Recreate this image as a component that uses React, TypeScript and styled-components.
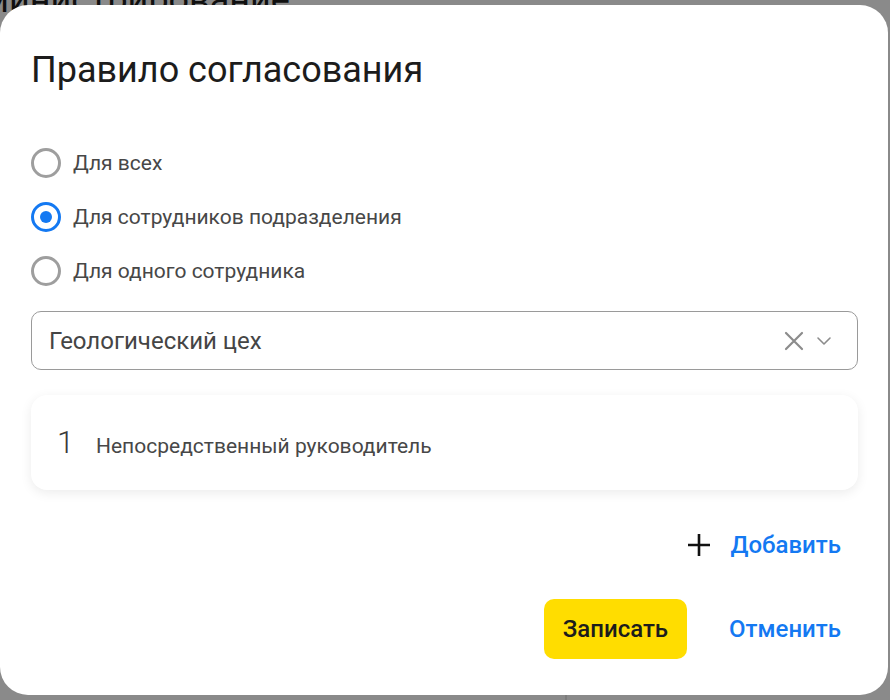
import React, { useState } from "react";
import styled, { createGlobalStyle } from "styled-components";

const GlobalStyle = createGlobalStyle`
  html, body { margin: 0; padding: 0; }
  body {
    font-family: Roboto, "Noto Sans", "Liberation Sans", sans-serif;
    background: #ffffff;
    overflow: hidden;
    width: 890px;
    height: 700px;
  }
  * { box-sizing: border-box; }
`;

const Page = styled.div`
  position: relative;
  width: 890px;
  height: 700px;
  overflow: hidden;
  display: flex;
  flex-direction: column;
`;

const PageHeading = styled.h1`
  margin: -21px 0 0 -63px;
  font-size: 36px;
  line-height: 43px;
  font-weight: 400;
  color: #1e1e1e;
  white-space: nowrap;
`;

const PageColumns = styled.div`
  flex: 1;
  display: grid;
  grid-template-columns: 567px 1fr;
`;

const PageColumn = styled.div<{ $divider?: boolean }>`
  border-right: ${(p) => (p.$divider ? "2px solid #e6e6e6" : "none")};
`;

const Overlay = styled.div`
  position: absolute;
  inset: 0;
  background: rgba(0, 0, 0, 0.46);
  display: flex;
  align-items: flex-start;
  justify-content: flex-start;
  padding-top: 5px;
`;

const Dialog = styled.div`
  width: 888px;
  height: 690px;
  background: #ffffff;
  border-radius: 28px;
  padding: 44px 30px 36px 31px;
  display: flex;
  flex-direction: column;
`;

const Title = styled.h2`
  margin: 0;
  font-size: 36px;
  line-height: 43px;
  font-weight: 400;
  color: #1c1c1c;
`;

const RadioList = styled.div`
  display: flex;
  flex-direction: column;
  gap: 12px;
  margin-top: 50px;
`;

const RadioRow = styled.label`
  display: flex;
  align-items: center;
  height: 42px;
  gap: 12px;
  cursor: pointer;
`;

const RadioCircle = styled.span<{ $checked: boolean }>`
  width: 30px;
  height: 30px;
  border-radius: 50%;
  border: 3px solid ${(p) => (p.$checked ? "#1479f2" : "#9e9e9e")};
  display: flex;
  align-items: center;
  justify-content: center;
  flex: none;
  &::after {
    content: "";
    width: 12px;
    height: 12px;
    border-radius: 50%;
    background: #1479f2;
    display: ${(p) => (p.$checked ? "block" : "none")};
  }
`;

const RadioLabel = styled.span`
  font-size: 21px;
  color: #474747;
`;

const Select = styled.div`
  margin-top: 19px;
  height: 59px;
  flex: none;
  border: 1px solid #9a9a9a;
  border-radius: 10px;
  display: flex;
  align-items: center;
  padding: 0 25px 0 17px;
`;

const SelectValue = styled.span`
  flex: 1;
  font-size: 24px;
  color: #454545;
`;

const SelectIcons = styled.span`
  display: flex;
  align-items: center;
  gap: 12px;
  color: #8c8c8c;
`;

const StepCard = styled.div`
  margin-top: 25px;
  height: 95px;
  flex: none;
  border-radius: 16px;
  background: #ffffff;
  box-shadow: 0 3px 12px rgba(0, 0, 0, 0.08);
  display: flex;
  align-items: center;
  padding: 0 26px;
`;

const StepLine = styled.div`
  display: flex;
  align-items: baseline;
`;

const StepNumber = styled.span`
  font-size: 31px;
  font-weight: 300;
  color: #3a3a3a;
  width: 39px;
`;

const StepText = styled.span`
  font-size: 21px;
  color: #474747;
`;

const AddRow = styled.div`
  margin-top: 31px;
  display: flex;
  justify-content: flex-end;
`;

const TextButton = styled.button`
  height: 48px;
  padding: 0 17px 0 19px;
  border: none;
  background: transparent;
  display: flex;
  align-items: center;
  gap: 19px;
  font-family: inherit;
  font-size: 24px;
  font-weight: 500;
  color: #1479f2;
  cursor: pointer;
`;

const Footer = styled.div`
  margin-top: 30px;
  display: flex;
  justify-content: flex-end;
  gap: 23px;
`;

const PrimaryButton = styled.button`
  height: 60px;
  padding: 0 19px;
  border: none;
  border-radius: 10px;
  background: #ffdd00;
  font-family: inherit;
  font-size: 24px;
  font-weight: 500;
  color: #1c1c1c;
  cursor: pointer;
`;

const FooterTextButton = styled(TextButton)`
  height: 60px;
`;

const options = [
  "Для всех",
  "Для сотрудников подразделения",
  "Для одного сотрудника",
];

export default function App() {
  const [selected, setSelected] = useState(1);
  return (
    <>
      <GlobalStyle />
      <Page>
        <PageHeading>Администрирование</PageHeading>
        <PageColumns>
          <PageColumn $divider />
          <PageColumn />
        </PageColumns>
        <Overlay>
          <Dialog>
            <Title>Правило согласования</Title>
            <RadioList>
              {options.map((o, i) => (
                <RadioRow key={o} onClick={() => setSelected(i)}>
                  <RadioCircle $checked={selected === i} />
                  <RadioLabel>{o}</RadioLabel>
                </RadioRow>
              ))}
            </RadioList>
            <Select>
              <SelectValue>Геологический цех</SelectValue>
              <SelectIcons>
                <svg width="20" height="20" viewBox="0 0 20 20" fill="none" stroke="currentColor" strokeWidth="2.2" strokeLinecap="round">
                  <path d="M2 2 L18 18 M18 2 L2 18" />
                </svg>
                <svg width="16" height="10" viewBox="0 0 16 10" fill="none" stroke="currentColor" strokeWidth="1.6" strokeLinecap="round" strokeLinejoin="round">
                  <path d="M2 2 L8 8 L14 2" />
                </svg>
              </SelectIcons>
            </Select>
            <StepCard>
              <StepLine>
                <StepNumber>1</StepNumber>
                <StepText>Непосредственный руководитель</StepText>
              </StepLine>
            </StepCard>
            <AddRow>
              <TextButton>
                <svg width="24" height="24" viewBox="0 0 24 24" fill="none" stroke="#111" strokeWidth="2.6">
                  <path d="M12 1 V23 M1 12 H23" />
                </svg>
                Добавить
              </TextButton>
            </AddRow>
            <Footer>
              <PrimaryButton>Записать</PrimaryButton>
              <FooterTextButton>Отменить</FooterTextButton>
            </Footer>
          </Dialog>
        </Overlay>
      </Page>
    </>
  );
}
